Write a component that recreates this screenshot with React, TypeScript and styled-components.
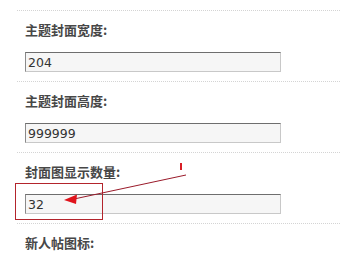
import { createGlobalStyle } from "styled-components";
import styled from "styled-components";

const GlobalStyle = createGlobalStyle`
  html, body {
    margin: 0;
    padding: 0;
    background: #ffffff;
  }
  body {
    font-family: "DejaVu Sans", "Noto Sans CJK SC", sans-serif;
  }
`

const Page = styled.div`
  position: relative;
  width: 340px;
  height: 256px;
  overflow: hidden;
  padding: 10px 0 0 17px;
  box-sizing: border-box;
`

const Field = styled.div`
  border-top: 1px dotted #d4d4d4;
  padding: 9px 0 9px 8px;
  display: flex;
  flex-direction: column;
  gap: 12px;
`

const Label = styled.div`
  height: 20px;
  line-height: 20px;
  font-family: "Noto Sans CJK SC", sans-serif;
  font-size: 13px;
  font-weight: 700;
  color: #474747;
`

const Input = styled.input`
  width: 256px;
  height: 20px;
  box-sizing: border-box;
  margin: 0;
  padding: 0 0 0 2px;
  border: 1px solid #c8c8c8;
  border-top-color: #6e6e6e;
  border-left-color: #8a8a8a;
  background: #f6f6f6;
  font-family: "DejaVu Sans", sans-serif;
  font-size: 12.5px;
  color: #333;
  outline: none;
`

const Overlay = styled.svg`
  position: absolute;
  left: 0;
  top: 0;
  pointer-events: none;
`

const fields = [
  { label: "主题封面宽度:", value: "204" },
  { label: "主题封面高度:", value: "999999" },
  { label: "封面图显示数量:", value: "32" },
  { label: "新人帖图标:", value: null },
];

export default function App() {
  return (
    <>
      <GlobalStyle />
      <Page>
        {fields.map((f, i) => (
          <Field key={`field-${i}`}>
            <Label>{f.label}</Label>
            {f.value !== null && <Input defaultValue={f.value} readOnly />}
          </Field>
        ))}
        <Overlay width="340" height="256" viewBox="0 0 340 256">
          <rect x="15.5" y="183.5" width="87" height="36" fill="none" stroke="#b3242c" strokeWidth="1" />
          <line x1="186" y1="175" x2="74" y2="199" stroke="#9a1a2a" strokeWidth="1" />
          <polygon points="64,200 77,194.5 76,204" fill="#e0141c" />
          <rect x="180" y="163" width="2" height="7" fill="#d81e26" />
        </Overlay>
      </Page>
    </>
  )
}
